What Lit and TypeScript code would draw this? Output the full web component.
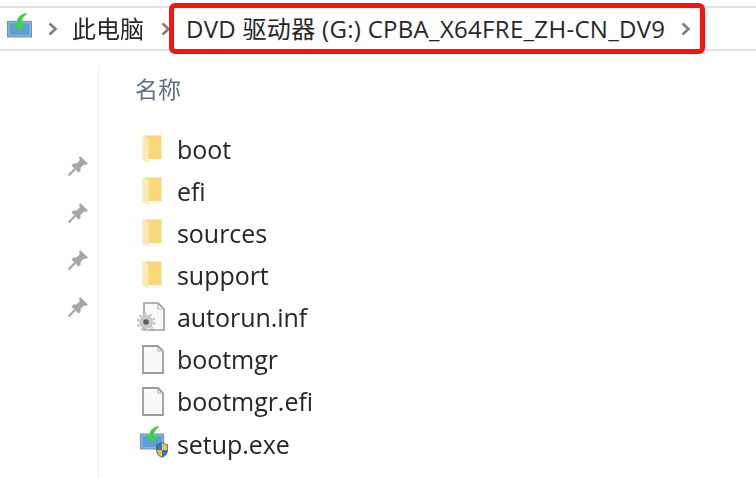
import { LitElement, css, html, svg } from 'lit'
import { customElement } from 'lit/decorators.js'

type FileKind = 'folder' | 'inf' | 'blank' | 'exe'

const files: { name: string; kind: FileKind }[] = [
  { name: 'boot', kind: 'folder' },
  { name: 'efi', kind: 'folder' },
  { name: 'sources', kind: 'folder' },
  { name: 'support', kind: 'folder' },
  { name: 'autorun.inf', kind: 'inf' },
  { name: 'bootmgr', kind: 'blank' },
  { name: 'bootmgr.efi', kind: 'blank' },
  { name: 'setup.exe', kind: 'exe' },
]

const chevron = html`<svg class="chevron" width="10" height="14" viewBox="0 0 10 14">
  <path d="M1.5 1.5 L7.5 7 L1.5 12.5" fill="none" stroke="#7f7f7f" stroke-width="2.6"/>
</svg>`

// green arrow swooping into a blue tray, used by the drive and by setup.exe
const setupArt = svg`
  <rect x="0.5" y="8" width="23" height="15" fill="#8db4d8" stroke="#6f93b5" stroke-width="1"/>
  <rect x="2.5" y="10" width="19" height="11" fill="#5d9fdc"/>
  <path d="M18 0 C12 2 9 5 9.5 10 L6 10 L12.5 18 L17.5 10 L14 10 C13.5 7 15 4 19 1 Z" fill="#3fcf4a"/>`

const fileIcons: Record<FileKind, unknown> = {
  folder: html`<svg width="20" height="28" viewBox="0 0 20 28">
    <path d="M2 0.5 H19.5 V24 H6 V4 Z" fill="#f8d878"/>
    <path d="M0.5 0.5 L6.5 3.5 V27.5 L0.5 25 Z" fill="#fcebb4"/>
  </svg>`,
  blank: html`<svg width="22" height="29" viewBox="0 0 22 29">
    <path d="M1 1 H16 L21 6 V28 H1 Z" fill="#fafafa" stroke="#9c9c9c" stroke-width="1.8"/>
    <path d="M16 1 V6 H21" fill="none" stroke="#b0b0b0" stroke-width="1.2"/>
  </svg>`,
  inf: html`<svg width="28" height="30" viewBox="0 0 28 30">
    <path d="M7 1 H21 L27 7 V28 H7 Z" fill="#fafafa" stroke="#9c9c9c" stroke-width="1.6"/>
    <path d="M21 1 V7 H27" fill="none" stroke="#b0b0b0" stroke-width="1.2"/>
    <circle cx="9" cy="20" r="7" fill="#c9c9c9"/>
    <circle cx="9" cy="20" r="8.2" fill="none" stroke="#c9c9c9" stroke-width="2.4" stroke-dasharray="2.6 2.6"/>
    <circle cx="9" cy="20" r="2.8" fill="#5c5c5c"/>
  </svg>`,
  exe: html`<svg width="28" height="32" viewBox="0 0 28 32">
    ${setupArt}
    <path d="M22 16 C19.5 18 18 18.5 16.5 18.5 V24 C16.5 28 19 30 22 31.5 C25 30 27.5 28 27.5 24 V18.5 C26 18.5 24.5 18 22 16 Z" fill="#3b74c4" stroke="#2f5f9e" stroke-width="0.8"/>
    <path d="M22 16.5 V24 H27.2 V19 C25.5 18.8 24 18 22 16.5 Z" fill="#f5c33b"/>
    <path d="M22 24 V31 C19.5 29.8 17.5 28 17 24 Z" fill="#f5c33b"/>
  </svg>`,
}

const pin = html`<svg width="22" height="22" viewBox="0 0 22 22">
  <path d="M13 1 L21 8.5 L18.5 10 L17 9.5 L13.5 13 L13.5 16 L11.5 17.5 L4.5 10.5 L6.5 8.5 L9.5 8.5 L13 5 L12 3 Z" fill="#a3a7aa"/>
  <path d="M8 14 L1.5 20.5" stroke="#a3a7aa" stroke-width="2.2"/>
</svg>`

@customElement('app-root')
export class AppRoot extends LitElement {
  static styles = css`
    :host {
      display: block;
      width: 756px;
      height: 478px;
      overflow: hidden;
      background: #fff;
      font-family: 'Open Sans', 'Noto Sans CJK SC', sans-serif;
      color: #262626;
    }
    .page {
      height: 100%;
      display: flex;
      flex-direction: column;
      filter: blur(0.45px);
    }
    .address {
      flex: none;
      height: 41px;
      margin-top: 6px;
      border-top: 2px solid #e2e2e2;
      border-bottom: 2px solid #e2e2e2;
      display: flex;
      align-items: center;
      font-size: 24px;
    }
    .drive {
      margin: 0 0 6px 7px;
      display: flex;
    }
    .chevron {
      flex: none;
    }
    .home-chevron {
      margin-left: 16px;
      display: flex;
    }
    .crumb {
      margin-left: 14px;
      padding-bottom: 3px;
      white-space: nowrap;
    }
    .sep {
      margin-left: 17px;
      display: flex;
    }
    .current {
      flex: none;
      box-sizing: border-box;
      width: 536px;
      height: 51px;
      margin: -4px 0 -4px -2px;
      border: 5px solid #f5140f;
      border-radius: 6px;
      background: #fff;
      display: flex;
      align-items: center;
      padding-left: 12px;
      white-space: nowrap;
    }
    .current span {
      padding-bottom: 3px;
      letter-spacing: 0.3px;
    }
    .current .chevron {
      margin-left: 16px;
    }
    .body {
      flex: 1;
      display: flex;
      min-height: 0;
    }
    .pins {
      flex: none;
      width: 98px;
      box-sizing: border-box;
      padding: 104px 0 0 67px;
      display: flex;
      flex-direction: column;
      gap: 25px;
    }
    .pins svg {
      display: block;
    }
    .content {
      flex: 1;
      margin-top: 14px;
      border-left: 1px solid #f2f2f2;
      padding-left: 36px;
    }
    .heading {
      font-size: 23px;
      line-height: 28px;
      margin-top: 10px;
      color: #5f7183;
    }
    .list {
      margin: 24.5px 0 0 0;
      padding: 0;
      list-style: none;
    }
    .list li {
      height: 42.15px;
      display: flex;
      align-items: center;
      font-size: 25px;
      letter-spacing: -0.05px;
    }
    .icon {
      flex: none;
      width: 42px;
      height: 30px;
      display: flex;
      align-items: center;
      box-sizing: border-box;
      padding-left: 7px;
    }
    .icon.inf {
      padding-left: 2px;
    }
    .icon.exe {
      padding: 0 0 4px 5px;
    }
  `

  render() {
    return html`
      <div class="page">
        <div class="address">
          <span class="drive"><svg width="25" height="25" viewBox="0 0 24 24">${setupArt}</svg></span>
          <span class="home-chevron">${chevron}</span>
          <span class="crumb">此电脑</span>
          <span class="sep">${chevron}</span>
          <div class="current">
            <span>DVD 驱动器 (G:) CPBA_X64FRE_ZH-CN_DV9</span>
            ${chevron}
          </div>
        </div>
        <div class="body">
          <div class="pins">${[0, 1, 2, 3].map(() => pin)}</div>
          <div class="content">
            <div class="heading">名称</div>
            <ul class="list">
              ${files.map(f => html`<li><span class="icon ${f.kind}">${fileIcons[f.kind]}</span>${f.name}</li>`)}
            </ul>
          </div>
        </div>
      </div>
    `
  }
}
